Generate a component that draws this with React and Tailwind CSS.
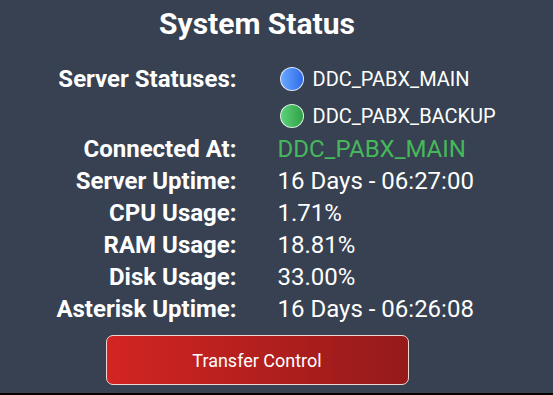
export default function App() {
  const rows = [
    ["Server Uptime:", "16 Days - 06:27:00"],
    ["CPU Usage:", "1.71%"],
    ["RAM Usage:", "18.81%"],
    ["Disk Usage:", "33.00%"],
    ["Asterisk Uptime:", "16 Days - 06:26:08"],
  ];
  return (
    <div
      className="w-[553px] h-[395px] bg-black overflow-hidden"
      style={{ fontFamily: "Roboto, 'Noto Sans', sans-serif" }}
    >
      <div className="h-[393px] bg-[#374151] text-white">
        <div className="w-[514px] flex flex-col items-center">
          <h1 className="mt-[6px] text-[30px] leading-9 font-bold">System Status</h1>
          <div className="mt-[21px] grid grid-cols-2 gap-x-[41px] w-full text-[24px] leading-8">
            <div className="font-bold text-right">Server Statuses:</div>
            <div className="flex flex-col gap-[5px] mb-[1px]">
              <div className="flex items-center h-8 gap-[9px] text-[20px]">
                <span className="w-[24px] h-[24px] rounded-full border border-white/80 bg-gradient-to-r from-[#6aa8ff] to-[#2f6ae8] ml-[2px]" />
                <span>DDC_PABX_MAIN</span>
              </div>
              <div className="flex items-center h-8 gap-[9px] text-[20px]">
                <span className="w-[24px] h-[24px] rounded-full border border-white/80 bg-gradient-to-r from-[#5cd27a] to-[#2fa046] ml-[2px]" />
                <span>DDC_PABX_BACKUP</span>
              </div>
            </div>
            <div className="font-bold text-right">Connected At:</div>
            <div className="text-[#45b95a]">DDC_PABX_MAIN</div>
            {rows.map(([l, v]) => (
              <div key={l} className="contents">
                <div className="font-bold text-right">{l}</div>
                <div>{v}</div>
              </div>
            ))}
          </div>
          <button className="mt-[10px] w-[303px] h-[50px] rounded-[7px] border border-[#f3d4d4] bg-gradient-to-r from-[#d32522] to-[#951a1a] text-[18px] text-white">
            Transfer Control
          </button>
        </div>
      </div>
    </div>
  );
}
